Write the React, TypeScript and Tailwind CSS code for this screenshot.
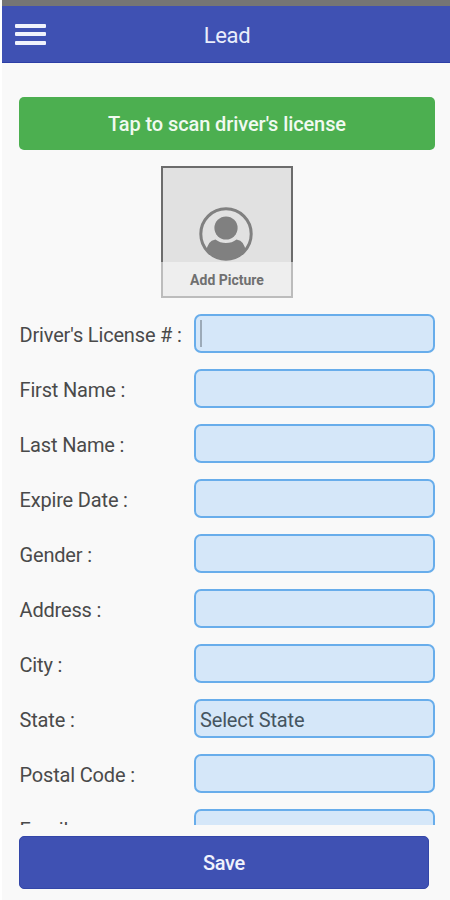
const fields: { label: string; value?: string; focused?: boolean }[] = [
  { label: "Driver's License # :", focused: true },
  { label: "First Name :" },
  { label: "Last Name :" },
  { label: "Expire Date :" },
  { label: "Gender :" },
  { label: "Address :" },
  { label: "City :" },
  { label: "State :", value: "Select State" },
  { label: "Postal Code :" },
  { label: "Email :" },
];

function Header() {
  return (
    <header className="grid h-[57px] shrink-0 grid-cols-[1fr_auto_1fr] items-center border-b border-[#2c3ea6] bg-[#3f51b3] pr-[11px] pl-[13px]">
      <button aria-label="Menu" className="flex w-[31px] flex-col gap-[4.5px]">
        <span className="h-[4px] rounded-[1px] bg-[#f0f2fc]" />
        <span className="h-[4px] rounded-[1px] bg-[#f0f2fc]" />
        <span className="h-[4px] rounded-[1px] bg-[#f0f2fc]" />
      </button>
      <h1 className="pt-[3px] text-[22px] leading-none tracking-[-0.3px] text-[#e9edfb]">Lead</h1>
    </header>
  );
}

function PicturePicker() {
  return (
    <button className="mx-auto mt-[16px] flex h-[132px] w-[132px] shrink-0 flex-col bg-[#e1e1e1]">
      <span className="flex h-[96px] w-full items-end justify-center border-2 border-b-0 border-[#6c6c6c] pr-[2px]">
        <svg width="54" height="54" viewBox="0 0 54 54" className="mb-px shrink-0">
          <defs>
            <clipPath id="disc">
              <circle cx="27" cy="27" r="25.5" />
            </clipPath>
          </defs>
          <g clipPath="url(#disc)" fill="#808080">
            <circle cx="27" cy="21" r="11.6" />
            <path d="M7 46 Q8 33.5 16.5 32.5 Q21 36 27 36 Q33 36 37.5 32.5 Q46 33.5 47 46 L40 56 H14 Z" />
          </g>
          <circle cx="27" cy="27" r="25.2" fill="none" stroke="#808080" strokeWidth="3" />
        </svg>
      </span>
      <span className="flex w-full flex-1 items-center justify-center border-x-2 border-b-2 border-[#bcbcbc] bg-[#eeeeee] pt-px text-[14px] leading-none font-bold text-[#707070]">
        Add Picture
      </span>
    </button>
  );
}

export default function App() {
  return (
    <div className="h-[900px] w-[450px] overflow-hidden bg-white pl-[2px] font-[Roboto,sans-serif]">
      <div className="flex h-full flex-col bg-[#f9f9f9]">
        <div className="h-[6px] shrink-0 bg-[#757575]" />
        <Header />
        <main className="flex h-[762px] shrink-0 flex-col overflow-hidden pt-[34px] pr-[15px] pl-[17px]">
          <button className="h-[53px] shrink-0 rounded-[5px] bg-[#4caf50] text-[20px] font-medium tracking-[-0.1px] text-[#f1faf1]">
            Tap to scan driver's license
          </button>
          <PicturePicker />
          <div className="mt-[7.5px] shrink-0">
            {fields.map(({ label, value, focused }) => (
              <div key={label} className="flex h-[55.1px] items-center">
                <span className="w-[175px] shrink-0 pt-[3px] pl-[0.5px] text-[20px] leading-none tracking-[-0.17px] whitespace-nowrap text-[#4a4a4a]">
                  {label}
                </span>
                <div className="flex h-[39px] flex-1 items-center rounded-[7px] border-2 border-[#68adeb] bg-[#d5e7f9] px-[4px] text-[20px] tracking-[-0.17px] text-[#455560]">
                  {focused && <span className="h-[27px] w-[2px] bg-[#9caab8]" />}
                  {value && <span className="pt-[2px]">{value}</span>}
                </div>
              </div>
            ))}
          </div>
        </main>
        <footer className="pt-[11px] pr-[21px] pl-[17px]">
          <button className="h-[53px] w-full rounded-[5px] border border-[#3346a8] bg-[#3f51b3] text-[20px] font-medium tracking-[-0.3px] text-[#f0f2fc]">
            Save
          </button>
        </footer>
      </div>
    </div>
  );
}
